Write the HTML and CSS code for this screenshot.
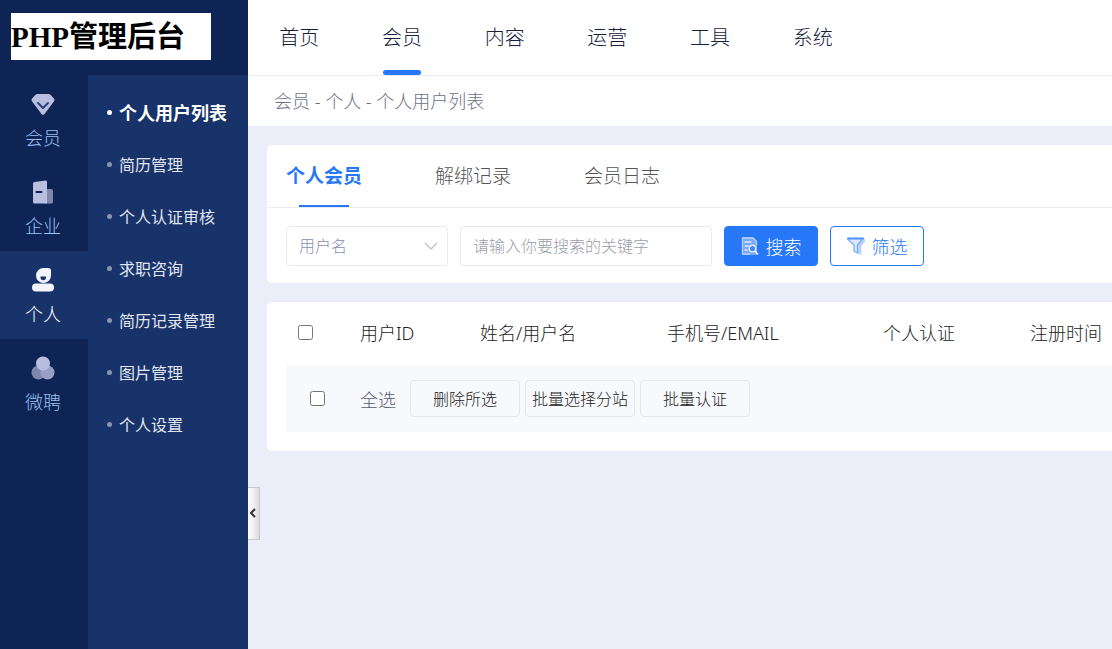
FILE: index.html
```html
<!DOCTYPE html>
<html lang="zh-CN">

<head>
    <meta charset="UTF-8">
    <meta name="viewport" content="width=device-width, initial-scale=1.0">
    <title>PHP管理后台</title>
    <link rel="stylesheet" href="styles.css">
</head>

<body>
    <div class="admin">
        <aside class="sidebar">
            <div class="logo"><span class="logo-text">PHP管理后台</span></div>
            <div class="menus">
                <nav class="menu-main">
                    <a href="#" class="menu-item">
                        <svg width="24" height="24" viewBox="0 0 24 24">
                            <path d="M6.500 2h11a3 3 0 0 1 2.200.9l3 3.400a2.500 2.500 0 0 1 0 3.400L13.500 22a2 2 0 0 1-3 0L1.300 9.700a2.500 2.500 0 0 1 0-3.400l3-3.400A3 3 0 0 1 6.500 2z" fill="#b9bddf" />
                            <path d="M7 11l5 5 5-5" fill="none" stroke="#303f78" stroke-width="2" stroke-linecap="round" stroke-linejoin="round" />
                        </svg>
                        <span>会员</span>
                    </a>
                    <a href="#" class="menu-item">
                        <svg width="24" height="24" viewBox="0 0 24 24">
                            <path d="M14 9h6a2 2 0 0 1 2 2v11a1.500 1.500 0 0 1-1.500 1.500H14z" fill="#7e88ae" />
                            <path d="M3.500 2l11-1.500A1.300 1.300 0 0 1 16 2v21.500H3.500A1.500 1.500 0 0 1 2 22V3.500A1.500 1.500 0 0 1 3.500 2z" fill="#b9bddf" />
                            <path d="M5.500 12h5" stroke="#0d2455" stroke-width="2" stroke-linecap="round" />
                        </svg>
                        <span>企业</span>
                    </a>
                    <a href="#" class="menu-item menu-item-on">
                        <svg width="24" height="24" viewBox="0 0 24 24">
                            <path d="M12.500 0h5A2.500 2.500 0 0 1 20 2.500V7a7.500 7.500 0 1 1-7.500-7z" fill="#f3f4fc" />
                            <path d="M9.500 8.500h5.500v1a2.750 2.750 0 0 1-5.500 0z" fill="#18336a" />
                            <rect x="1" y="15.500" width="22" height="8" rx="4" fill="#f3f4fc" />
                        </svg>
                        <span>个人</span>
                    </a>
                    <a href="#" class="menu-item">
                        <svg width="24" height="24" viewBox="0 0 24 24">
                            <circle cx="7.500" cy="16.500" r="7" fill="#7e88ae" />
                            <circle cx="16.500" cy="16.500" r="7" fill="#989fc6" />
                            <circle cx="12" cy="7.500" r="7" fill="#b9bddf" />
                        </svg>
                        <span>微聘</span>
                    </a>
                </nav>
                <nav class="menu-sub">
                    <a href="#" class="sub-item sub-item-on">个人用户列表</a>
                    <a href="#" class="sub-item">简历管理</a>
                    <a href="#" class="sub-item">个人认证审核</a>
                    <a href="#" class="sub-item">求职咨询</a>
                    <a href="#" class="sub-item">简历记录管理</a>
                    <a href="#" class="sub-item">图片管理</a>
                    <a href="#" class="sub-item">个人设置</a>
                </nav>
            </div>
            <button type="button" class="fold" aria-label="收起菜单">
                <svg width="8" height="10" viewBox="0 0 8 10">
                    <path d="M6 1L2 5l4 4" fill="none" stroke="#333" stroke-width="2" />
                </svg>
            </button>
        </aside>

        <div class="main">
            <header class="header">
                <nav class="topnav">
                    <a href="#" class="topnav-item">首页</a>
                    <a href="#" class="topnav-item topnav-item-on">会员</a>
                    <a href="#" class="topnav-item">内容</a>
                    <a href="#" class="topnav-item">运营</a>
                    <a href="#" class="topnav-item">工具</a>
                    <a href="#" class="topnav-item">系统</a>
                </nav>
            </header>
            <div class="crumb">会员 - 个人 - 个人用户列表</div>

            <main class="content">
                <section class="card">
                    <nav class="tabs">
                        <a href="#" class="tab tab-on">个人会员</a>
                        <a href="#" class="tab">解绑记录</a>
                        <a href="#" class="tab">会员日志</a>
                    </nav>
                    <form class="search">
                        <div class="select-box">
                            <select class="field field-select" name="type" aria-label="搜索类型">
                                <option>用户名</option>
                            </select>
                            <svg class="select-arrow" width="14" height="8" viewBox="0 0 14 8">
                                <path d="M1 1l6 6 6-6" fill="none" stroke="#c0c4d8" stroke-width="1.500" />
                            </svg>
                        </div>
                        <input class="field field-keyword" type="text" name="keyword" aria-label="关键字" placeholder="请输入你要搜索的关键字">
                        <button type="submit" class="btn btn-search">
                            <svg width="18" height="18" viewBox="0 0 18 18">
                                <path d="M2 0h10l4 4v13a1 1 0 0 1-1 1H2a1 1 0 0 1-1-1V1a1 1 0 0 1 1-1z" fill="#78aafb" />
                                <path d="M9 17H1.500V1H12l3.500 3.500V8" fill="none" stroke="#b5d0fd" stroke-width="1.300" />
                                <path d="M3.500 5h7M3.500 9h4M3.500 13h3" stroke="#dbe8ff" stroke-width="1.500" />
                                <circle cx="11.500" cy="11.500" r="3.300" fill="#3f86f8" stroke="#e4eeff" stroke-width="1.500" />
                                <path d="M14 14l3 3.500" stroke="#e4eeff" stroke-width="1.800" />
                            </svg>
                            <span>搜索</span>
                        </button>
                        <button type="button" class="btn btn-filter">
                            <svg width="18" height="18" viewBox="0 0 18 18">
                                <path d="M11 8l4.500-6H18v2.500L14.500 9v9L11 17z" fill="#b9d3fd" />
                                <path d="M1 1.500h15L10.500 8v8L7 14V8L1 2.500z" fill="#dbe8fe" stroke="#78aafa" stroke-width="1.300" stroke-linejoin="round" />
                                <path d="M1 1.500h15" stroke="#5a97f9" stroke-width="2" stroke-linecap="round" />
                            </svg>
                            <span>筛选</span>
                        </button>
                    </form>
                </section>

                <section class="card card-list">
                    <table class="list">
                        <thead>
                            <tr>
                                <th class="col-check"><input type="checkbox" class="check" aria-label="选择"></th>
                                <th class="col-id">用户ID</th>
                                <th class="col-name">姓名/用户名</th>
                                <th class="col-phone">手机号/EMAIL</th>
                                <th class="col-cert">个人认证</th>
                                <th class="col-time">注册时间</th>
                            </tr>
                        </thead>
                        <tbody>
                            <tr class="batch">
                                <td class="batch-check"><input type="checkbox" class="check" id="checkAll"></td>
                                <td colspan="5">
                                    <div class="batch-bar">
                                        <label for="checkAll" class="batch-label">全选</label>
                                        <button type="button" class="btn-batch">删除所选</button>
                                        <button type="button" class="btn-batch">批量选择分站</button>
                                        <button type="button" class="btn-batch">批量认证</button>
                                    </div>
                                </td>
                            </tr>
                        </tbody>
                    </table>
                </section>
            </main>
        </div>
    </div>
</body>

</html>
```
FILE: styles.css
```css
* {
    box-sizing: border-box;
    margin: 0;
    padding: 0;
}

body {
    font-family: "Noto Sans", "Noto Sans CJK SC", sans-serif;
    font-size: 18px;
    font-weight: 300;
    color: #222;
    background: #ebeef8;
}

a {
    color: inherit;
    text-decoration: none;
}

button,
input,
select {
    font: inherit;
}

.admin {
    display: flex;
    min-height: 100vh;
}

/* sidebar */
.sidebar {
    position: relative;
    display: flex;
    flex-direction: column;
    flex: none;
    width: 248px;
    background: #0d2455;
}

.logo {
    height: 75px;
    padding: 13px 11px;
}

.logo-text {
    display: block;
    width: 200px;
    height: 47px;
    line-height: 48px;
    font-family: "Liberation Serif", "Noto Sans CJK SC", serif;
    font-size: 29px;
    font-weight: 700;
    color: #000;
    background: #fff;
}

.menus {
    display: flex;
    flex: 1;
}

.menu-main {
    width: 88px;
}

.menu-item {
    display: flex;
    flex-direction: column;
    align-items: center;
    gap: 8px;
    height: 88px;
    padding: 17px 2px 0 0;
    line-height: 28px;
    color: #9cc0f2;
}

.menu-item-on {
    color: #fff;
    background: #18336a;
}

.menu-sub {
    flex: 1;
    padding: 11px 0 0 19px;
    background: #18336a;
}

.sub-item {
    display: flex;
    align-items: center;
    gap: 7px;
    height: 52px;
    font-size: 16px;
    font-weight: 400;
    color: #e2e6f0;
    white-space: nowrap;
}

.sub-item::before {
    content: "";
    width: 5px;
    height: 5px;
    border-radius: 50%;
    background: #8b93b5;
}

.sub-item-on {
    font-size: 18px;
    font-weight: 700;
    color: #fff;
}

.sub-item-on::before {
    background: #fff;
}

.fold {
    position: absolute;
    top: 75%;
    left: 100%;
    display: flex;
    align-items: center;
    width: 12px;
    height: 53px;
    padding-left: 1px;
    border: 1px solid #c8c8cc;
    border-left: 0;
    background: linear-gradient(to right, #fff, #f0f0f2 50%, #dcdce2);
}

/* right side */
.main {
    flex: 1;
    min-width: 0;
    overflow: hidden;
}

.header {
    background: #fff;
    border-bottom: 1px solid #e8eaf4;
}

.topnav {
    display: grid;
    grid-template-columns: repeat(6, 1fr);
    max-width: 616px;
}

.topnav-item {
    display: flex;
    flex-direction: column;
    align-items: center;
    font-size: 20px;
    line-height: 75px;
    color: #14213d;
}

.topnav-item-on::after {
    content: "";
    width: 38px;
    height: 5px;
    margin-top: -5px;
    border-radius: 3px;
    background: #2778f8;
}

.crumb {
    padding-left: 26px;
    line-height: 50px;
    color: #6c7186;
    background: #fff;
}

.content {
    padding: 19px 0 19px 19px;
}

.card {
    border-radius: 5px 0 0 5px;
    background: #fff;
}

.tabs {
    display: flex;
    gap: 73px;
    height: 63px;
    padding-left: 19px;
    border-bottom: 1px solid #ebecf0;
}

.tab {
    display: flex;
    flex-direction: column;
    align-items: center;
    font-size: 19px;
    line-height: 62px;
    color: #555;
}

.tab-on {
    font-weight: 700;
    color: #2778f8;
}

.tab-on::after {
    content: "";
    width: 50px;
    height: 2px;
    margin-top: -2px;
    background: #2778f8;
}

.search {
    display: flex;
    gap: 12px;
    padding: 18px 19px 17px;
}

.select-box {
    position: relative;
}

.field {
    height: 40px;
    padding: 0 12px;
    font-size: 16px;
    border: 1px solid #e8eaf4;
    border-radius: 4px;
    background: #fff;
}

.field-select {
    width: 162px;
    color: #8690b0;
    appearance: none;
}

.select-arrow {
    position: absolute;
    top: 16px;
    right: 10px;
    pointer-events: none;
}

.field-keyword {
    width: 252px;
}

.field-keyword::placeholder {
    color: #9a9ea8;
}

.btn {
    display: flex;
    align-items: center;
    justify-content: center;
    gap: 7px;
    width: 94px;
    height: 40px;
    padding-bottom: 1px;
    border: 1px solid #2778f8;
    border-radius: 4px;
}

.btn-search {
    color: #fff;
    background: #2778f8;
}

.btn-filter {
    color: #2778f8;
    background: #fff;
}

.card-list {
    margin-top: 19px;
    padding: 0 0 19px 19px;
}

/* list */
.list {
    width: 100%;
    table-layout: fixed;
    border-collapse: collapse;
}

.list th {
    height: 63px;
    padding-bottom: 3px;
    font-weight: 300;
    text-align: left;
    white-space: nowrap;
}

.list .col-check {
    width: 74px;
    padding-left: 12px;
}

.col-id {
    width: 120px;
}

.col-name {
    width: 187px;
}

.col-phone {
    width: 216px;
}

.col-cert {
    width: 147px;
}

.check {
    display: block;
    width: 15px;
    height: 15px;
}

.batch {
    height: 67px;
    background: #f8f9fc;
}

.batch-check {
    padding-left: 24px;
}

.batch-bar {
    display: flex;
    align-items: center;
    gap: 5px;
}

.batch-label {
    width: 45px;
    color: #555a75;
}

.btn-batch {
    width: 110px;
    height: 37px;
    padding-bottom: 2px;
    font-size: 16px;
    color: #222;
    white-space: nowrap;
    border: 1px solid #e4e9ee;
    border-radius: 4px;
    background: #f8f9fc;
}
```
